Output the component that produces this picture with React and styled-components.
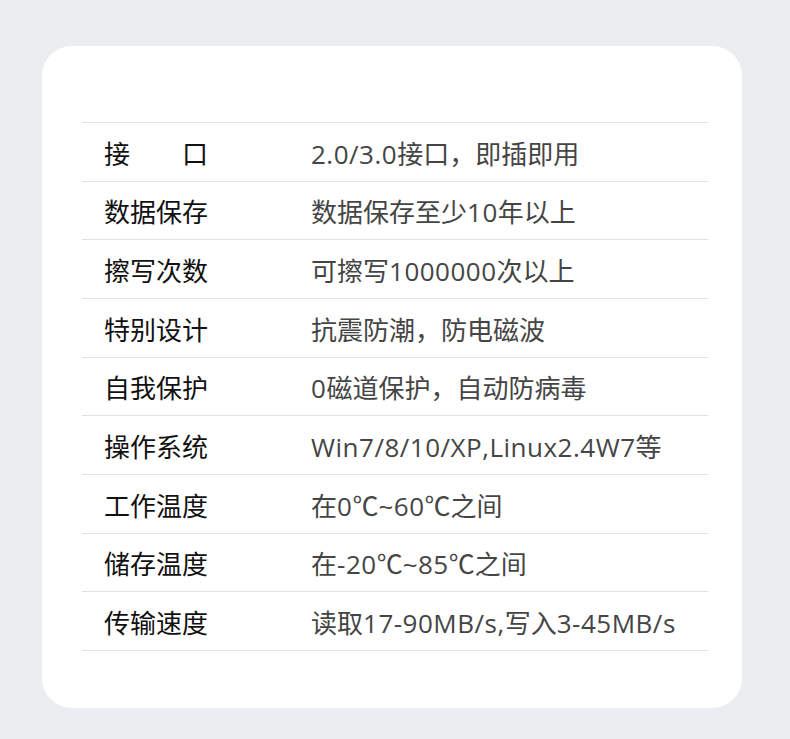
import React from "react"
import styled, { createGlobalStyle } from "styled-components"

const specs = [
  ["接　　口", "2.0/3.0接口，即插即用"],
  ["数据保存", "数据保存至少10年以上"],
  ["擦写次数", "可擦写1000000次以上"],
  ["特别设计", "抗震防潮，防电磁波"],
  ["自我保护", "0磁道保护，自动防病毒"],
  ["操作系统", "Win7/8/10/XP,Linux2.4W7等"],
  ["工作温度", "在0℃~60℃之间"],
  ["储存温度", "在-20℃~85℃之间"],
  ["传输速度", "读取17-90MB/s,写入3-45MB/s"],
]

const GlobalStyle = createGlobalStyle`
  body {
    margin: 0;
    background: #ecedf1;
    font-family: "Open Sans", "Noto Sans CJK SC", sans-serif;
  }
`

const Page = styled.div`
  padding: 46px 48px 31px 42px;
`

const Card = styled.div`
  width: 700px;
  height: 662px;
  box-sizing: border-box;
  background: #fff;
  border-radius: 30px;
  padding: 76px 34px 0 40px;
`

const SpecTable = styled.div`
  border-top: 1px solid #e2e2e2;
`

const Row = styled.div`
  display: flex;
  align-items: center;
  height: 58.67px;
  box-sizing: border-box;
  padding: 4px 0 0 22px;
  border-bottom: 1px solid #e2e2e2;
`

const Label = styled.div`
  width: 207px;
  flex-shrink: 0;
  font-size: 26px;
  line-height: 36px;
  color: #111;
  white-space: pre;
`

const Value = styled.div`
  font-size: 26px;
  line-height: 36px;
  color: #454545;
  white-space: nowrap;
`

// Latin runs sit a touch looser than the CJK text around them
const Latin = styled.span`
  letter-spacing: 0.5px;
`

const splitLatin = text =>
  text.split(/([\x20-\x7e]+)/).map((part, i) =>
    i % 2 ? <Latin key={i}>{part}</Latin> : part
  )

const App = () => (
  <>
    <GlobalStyle />
    <Page>
      <Card>
        <SpecTable>
          {specs.map(([label, value]) => (
            <Row key={label}>
              <Label>{label}</Label>
              <Value>{splitLatin(value)}</Value>
            </Row>
          ))}
        </SpecTable>
      </Card>
    </Page>
  </>
)

export default App
